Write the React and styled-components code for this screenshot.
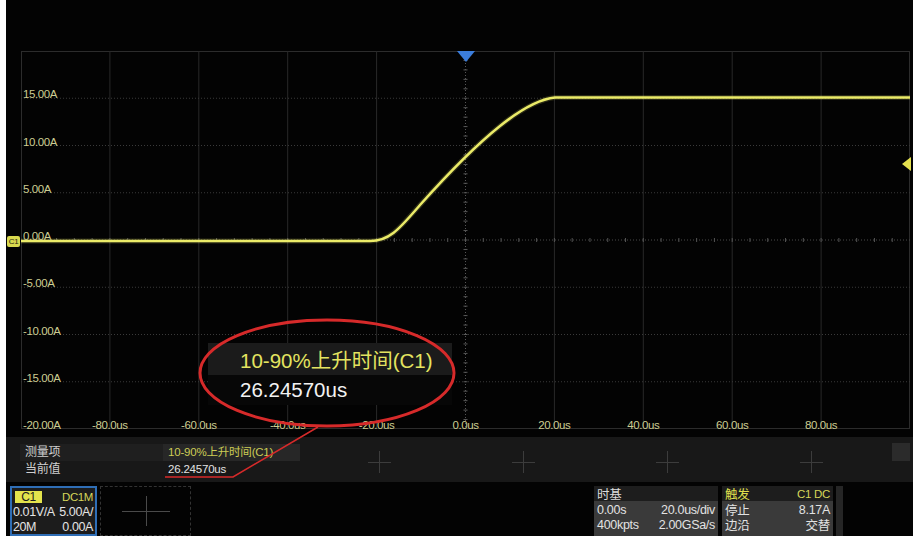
import React from 'react';
import styled, { createGlobalStyle } from 'styled-components';

const GlobalStyle = createGlobalStyle`
  html, body {
    margin: 0;
    padding: 0;
    background: #ffffff;
  }
  body {
    font-family: "Liberation Sans", "Noto Sans CJK SC", sans-serif;
  }
`;

const FONT = `"Liberation Sans", "Noto Sans CJK SC", sans-serif`;

// plot geometry (px)
const PW = 889;
const PH = 378;
const DX = PW / 10;
const DY = PH / 8;

const Frame = styled.div`
  width: 920px;
  height: 541px;
  box-sizing: border-box;
  padding: 0 7px 5px 6px;
  background: #fff;
`;

const Screen = styled.div`
  position: relative;
  width: 907px;
  height: 536px;
  background: #030303;
  display: flex;
  flex-direction: column;
  overflow: hidden;
  font-family: ${FONT};
`;

const PlotRegion = styled.div`
  height: 437px;
  box-sizing: border-box;
  padding: 51px 0 0 15px;
`;

const Plot = styled.div`
  position: relative;
  width: ${PW}px;
  height: ${PH}px;
`;

const PlotSvg = styled.svg`
  position: absolute;
  left: 0;
  top: 0;
  overflow: visible;
`;

const AxisLabel = styled.span`
  position: absolute;
  font-size: 11.5px;
  line-height: 12px;
  color: #cdcd92;
  letter-spacing: -0.4px;
  white-space: nowrap;
`;

const YLabel = styled(AxisLabel)`
  left: 2px;
`;

const XLabel = styled(AxisLabel)`
  top: 368px;
  transform: translateX(-50%);
`;

const ChannelTag = styled.span`
  position: absolute;
  left: -14px;
  top: 185px;
  width: 13px;
  height: 11px;
  box-sizing: border-box;
  background: #d9d94e;
  border-radius: 2px;
  color: #2a2a10;
  font-size: 8px;
  line-height: 11px;
  text-align: center;
  letter-spacing: -0.3px;
`;

const Marker = styled.svg`
  position: absolute;
  left: ${p => p.$x}px;
  top: ${p => p.$y}px;
`;

const Callout = styled.div`
  position: absolute;
  left: 202px;
  top: 343px;
  width: 244px;
  display: flex;
  flex-direction: column;
`;

const CalloutRow = styled.div`
  height: ${p => p.$h}px;
  display: flex;
  align-items: center;
  padding-left: 32px;
  background: ${p => p.$bg};
  color: ${p => p.$color};
  font-size: 20.5px;
  white-space: nowrap;
`;

const Annotation = styled.svg`
  position: absolute;
  left: 0;
  top: 0;
  pointer-events: none;
`;

const MeasurePanel = styled.div`
  display: flex;
  height: 45px;
  background: #181818;
  padding-left: 14px;
  box-sizing: border-box;
`;

const LabelCol = styled.div`
  width: 143px;
  padding-top: 7px;
  display: flex;
  flex-direction: column;
`;

const Cell = styled.div`
  height: 17px;
  line-height: 17px;
  padding-left: ${p => p.$pad || 5}px;
  font-size: ${p => p.$size || 12}px;
  color: ${p => p.$color || '#cfcfcf'};
  background: ${p => p.$bg || 'transparent'};
  white-space: nowrap;
  letter-spacing: -0.2px;
`;

const Slot = styled.div`
  width: 144px;
  display: flex;
  align-items: center;
  justify-content: center;
`;

const ValueSlot = styled.div`
  width: 144px;
  padding-top: 7px;
  display: flex;
  flex-direction: column;
  & > div {
    width: 132px;
  }
`;

const Cross = styled.span`
  position: relative;
  width: ${p => p.$w}px;
  height: ${p => p.$h}px;
  margin-top: ${p => p.$dy || 0}px;
  &::before,
  &::after {
    content: '';
    position: absolute;
    background: ${p => p.$color || '#3c3c3c'};
  }
  &::before {
    left: 0;
    right: 0;
    top: 50%;
    height: 1px;
  }
  &::after {
    top: 0;
    bottom: 0;
    left: 50%;
    width: 1px;
  }
`;

const CloseBox = styled.div`
  width: 18px;
  height: 18px;
  margin: 6px 3px 0 auto;
  background: #2b2b2b;
`;

const StatusBar = styled.div`
  display: flex;
  height: 50px;
  margin-top: 4px;
  padding: 0 70px 0 4px;
  gap: 3px;
`;

const ChannelBox = styled.div`
  width: 87px;
  box-sizing: border-box;
  border: 2px solid #2f6eb6;
  background: #1c1c1c;
  display: flex;
  flex-direction: column;
  padding: 1px 2px 0 1px;
  font-size: 12.5px;
  color: #e4e4e4;
  letter-spacing: -0.4px;
`;

const BoxRow = styled.div`
  height: ${p => p.$h || 15}px;
  display: flex;
  align-items: center;
  justify-content: space-between;
  white-space: nowrap;
  color: ${p => p.$color || 'inherit'};
`;

const ChTag = styled.span`
  width: 27px;
  height: 12px;
  margin-left: 2px;
  background: #e4e44c;
  color: #1d1d1d;
  font-size: 12px;
  line-height: 12px;
  text-align: center;
`;

const EmptySlot = styled.div`
  width: 91px;
  box-sizing: border-box;
  border: 1px dashed #333;
  display: flex;
  align-items: center;
  justify-content: center;
`;

const Spacer = styled.div`
  flex: 1;
`;

const InfoPanel = styled.div`
  width: ${p => p.$w}px;
  display: flex;
  flex-direction: column;
  margin-right: ${p => p.$mr || 0}px;
  font-size: 12.5px;
  letter-spacing: -0.3px;
`;

const InfoHead = styled.div`
  height: 15px;
  display: flex;
  align-items: center;
  justify-content: space-between;
  padding: 0 3px;
  background: #1d1d1d;
  color: ${p => p.$color || '#dcdcdc'};
`;

const InfoBody = styled.div`
  flex: 1;
  background: #3a3a3a;
  color: #e2e2e2;
  padding: 1px 3px 0;
  display: flex;
  flex-direction: column;
`;

const HeadRight = styled.span`
  color: #d6d65a;
  font-size: 11.5px;
`;

const Strip = styled.div`
  width: 7px;
  background: #262626;
`;

const yLabels = ['15.00A', '10.00A', '5.00A', '0.00A', '-5.00A', '-10.00A', '-15.00A', '-20.00A'];
const xLabels = ['-80.0us', '-60.0us', '-40.0us', '-20.0us', '0.0us', '20.0us', '40.0us', '60.0us', '80.0us'];

const tracePath =
  `M0 190 L349 190 C369 190, 379 177, 399 154 C424 126, 449 99, 479 75 ` +
  `C499 59, 519 48, 534 46.5 L${PW} 46.5`;

function Grid() {
  const ticksX = [];
  for (let i = 1; i < 50; i++) ticksX.push(i * DX / 5);
  const ticksY = [];
  for (let j = 1; j < 40; j++) ticksY.push(j * DY / 5);
  return (
    <PlotSvg width={PW} height={PH} viewBox={`0 0 ${PW} ${PH}`}>
      <rect x="0.5" y="0.5" width={PW - 1} height={PH - 1} fill="none" stroke="#2c2c2c" />
      {Array.from({ length: 9 }, (_, i) => (
        i === 4 ? null :
        <line key={'v' + i} x1={(i + 1) * DX} x2={(i + 1) * DX} y1="0" y2={PH} stroke="#292929" strokeWidth="1" />
      ))}
      {Array.from({ length: 7 }, (_, j) => (
        j === 3 ? null :
        <line key={'h' + j} x1="0" x2={PW} y1={(j + 1) * DY} y2={(j + 1) * DY} stroke="#3a3a3a" strokeWidth="1" strokeDasharray="1 2" />
      ))}
      {/* centre axes with ticks */}
      <line x1={PW / 2} x2={PW / 2} y1="0" y2={PH} stroke="#555" strokeDasharray="1 2" />
      <line x1="0" x2={PW} y1={PH / 2} y2={PH / 2} stroke="#4a4a4a" strokeDasharray="1 2" />
      {ticksY.map(y => (
        <line key={'ty' + y} x1={PW / 2 - 2} x2={PW / 2 + 2} y1={y} y2={y} stroke="#5a5a5a" />
      ))}
      {ticksX.map(x => (
        <line key={'tx' + x} x1={x} x2={x} y1={PH / 2 - 2} y2={PH / 2 + 2} stroke="#555" />
      ))}
      <path d={tracePath} fill="none" stroke="#e6e66a" strokeWidth="5" strokeOpacity="0.18" />
      <path d={tracePath} fill="none" stroke="#ebeb68" strokeWidth="2.5" strokeLinejoin="round" />
    </PlotSvg>
  );
}

export default function App() {
  return (
    <>
      <GlobalStyle />
      <Frame>
        <Screen>
          <PlotRegion>
            <Plot>
              <Grid />
              {yLabels.map((t, j) => (
                <YLabel key={t} style={{ top: (j + 1) * DY - 10 }}>{t}</YLabel>
              ))}
              {xLabels.map((t, i) => (
                <XLabel key={t} style={{ left: (i + 1) * DX }}>{t}</XLabel>
              ))}
              <ChannelTag>C1</ChannelTag>
              <Marker $x={PW / 2 - 9} $y={0} width="18" height="11" viewBox="0 0 18 11">
                <path d="M0 0 H18 L9 11 Z" fill="#3b7ddb" />
              </Marker>
              <Marker $x={881} $y={106} width="9" height="14" viewBox="0 0 9 14">
                <path d="M9 0 V14 L0 7 Z" fill="#e4e04e" />
              </Marker>
            </Plot>
          </PlotRegion>

          <MeasurePanel>
            <LabelCol>
              <Cell $bg="#1f1f1f">测量项</Cell>
              <Cell>当前值</Cell>
            </LabelCol>
            <ValueSlot>
              <Cell $bg="#272727" $color="#cccc55" $size={11.5} $pad={5}>10-90%上升时间(C1)</Cell>
              <Cell $color="#e2e2e2" $size={11.5} $pad={5}>26.24570us</Cell>
            </ValueSlot>
            {[0, 1, 2, 3].map(i => (
              <Slot key={i}>
                <Cross $w={23} $h={22} $dy={4} />
              </Slot>
            ))}
            <CloseBox />
          </MeasurePanel>

          <StatusBar>
            <ChannelBox>
              <BoxRow $h={15}>
                <ChTag>C1</ChTag>
                <HeadRight>DC1M</HeadRight>
              </BoxRow>
              <BoxRow><span>0.01V/A</span><span>5.00A/</span></BoxRow>
              <BoxRow><span>20M</span><span>0.00A</span></BoxRow>
            </ChannelBox>
            <EmptySlot>
              <Cross $w={48} $h={30} $color="#4a4a4a" />
            </EmptySlot>
            <Spacer />
            <InfoPanel $w={124} $mr={1}>
              <InfoHead><span>时基</span></InfoHead>
              <InfoBody>
                <BoxRow><span>0.00s</span><span>20.0us/div</span></BoxRow>
                <BoxRow><span>400kpts</span><span>2.00GSa/s</span></BoxRow>
              </InfoBody>
            </InfoPanel>
            <InfoPanel $w={111}>
              <InfoHead $color="#e0e04e"><span>触发</span><HeadRight>C1 DC</HeadRight></InfoHead>
              <InfoBody>
                <BoxRow><span>停止</span><span>8.17A</span></BoxRow>
                <BoxRow><span>边沿</span><span>交替</span></BoxRow>
              </InfoBody>
            </InfoPanel>
            <Strip />
          </StatusBar>

          <Callout>
            <CalloutRow $h={32} $bg="#1b1b1b" $color="#e4e460">10-90%上升时间(C1)</CalloutRow>
            <CalloutRow $h={30} $bg="#070707" $color="#f2f2f2">26.24570us</CalloutRow>
          </Callout>

          <Annotation width="907" height="536" viewBox="0 0 907 536">
            <ellipse cx="321" cy="373" rx="127" ry="53" fill="none" stroke="#d62a2a" strokeWidth="3" />
            <polyline points="312,427 227,477 159,477" fill="none" stroke="#d62a2a" strokeWidth="1.5" />
          </Annotation>
        </Screen>
      </Frame>
    </>
  );
}
